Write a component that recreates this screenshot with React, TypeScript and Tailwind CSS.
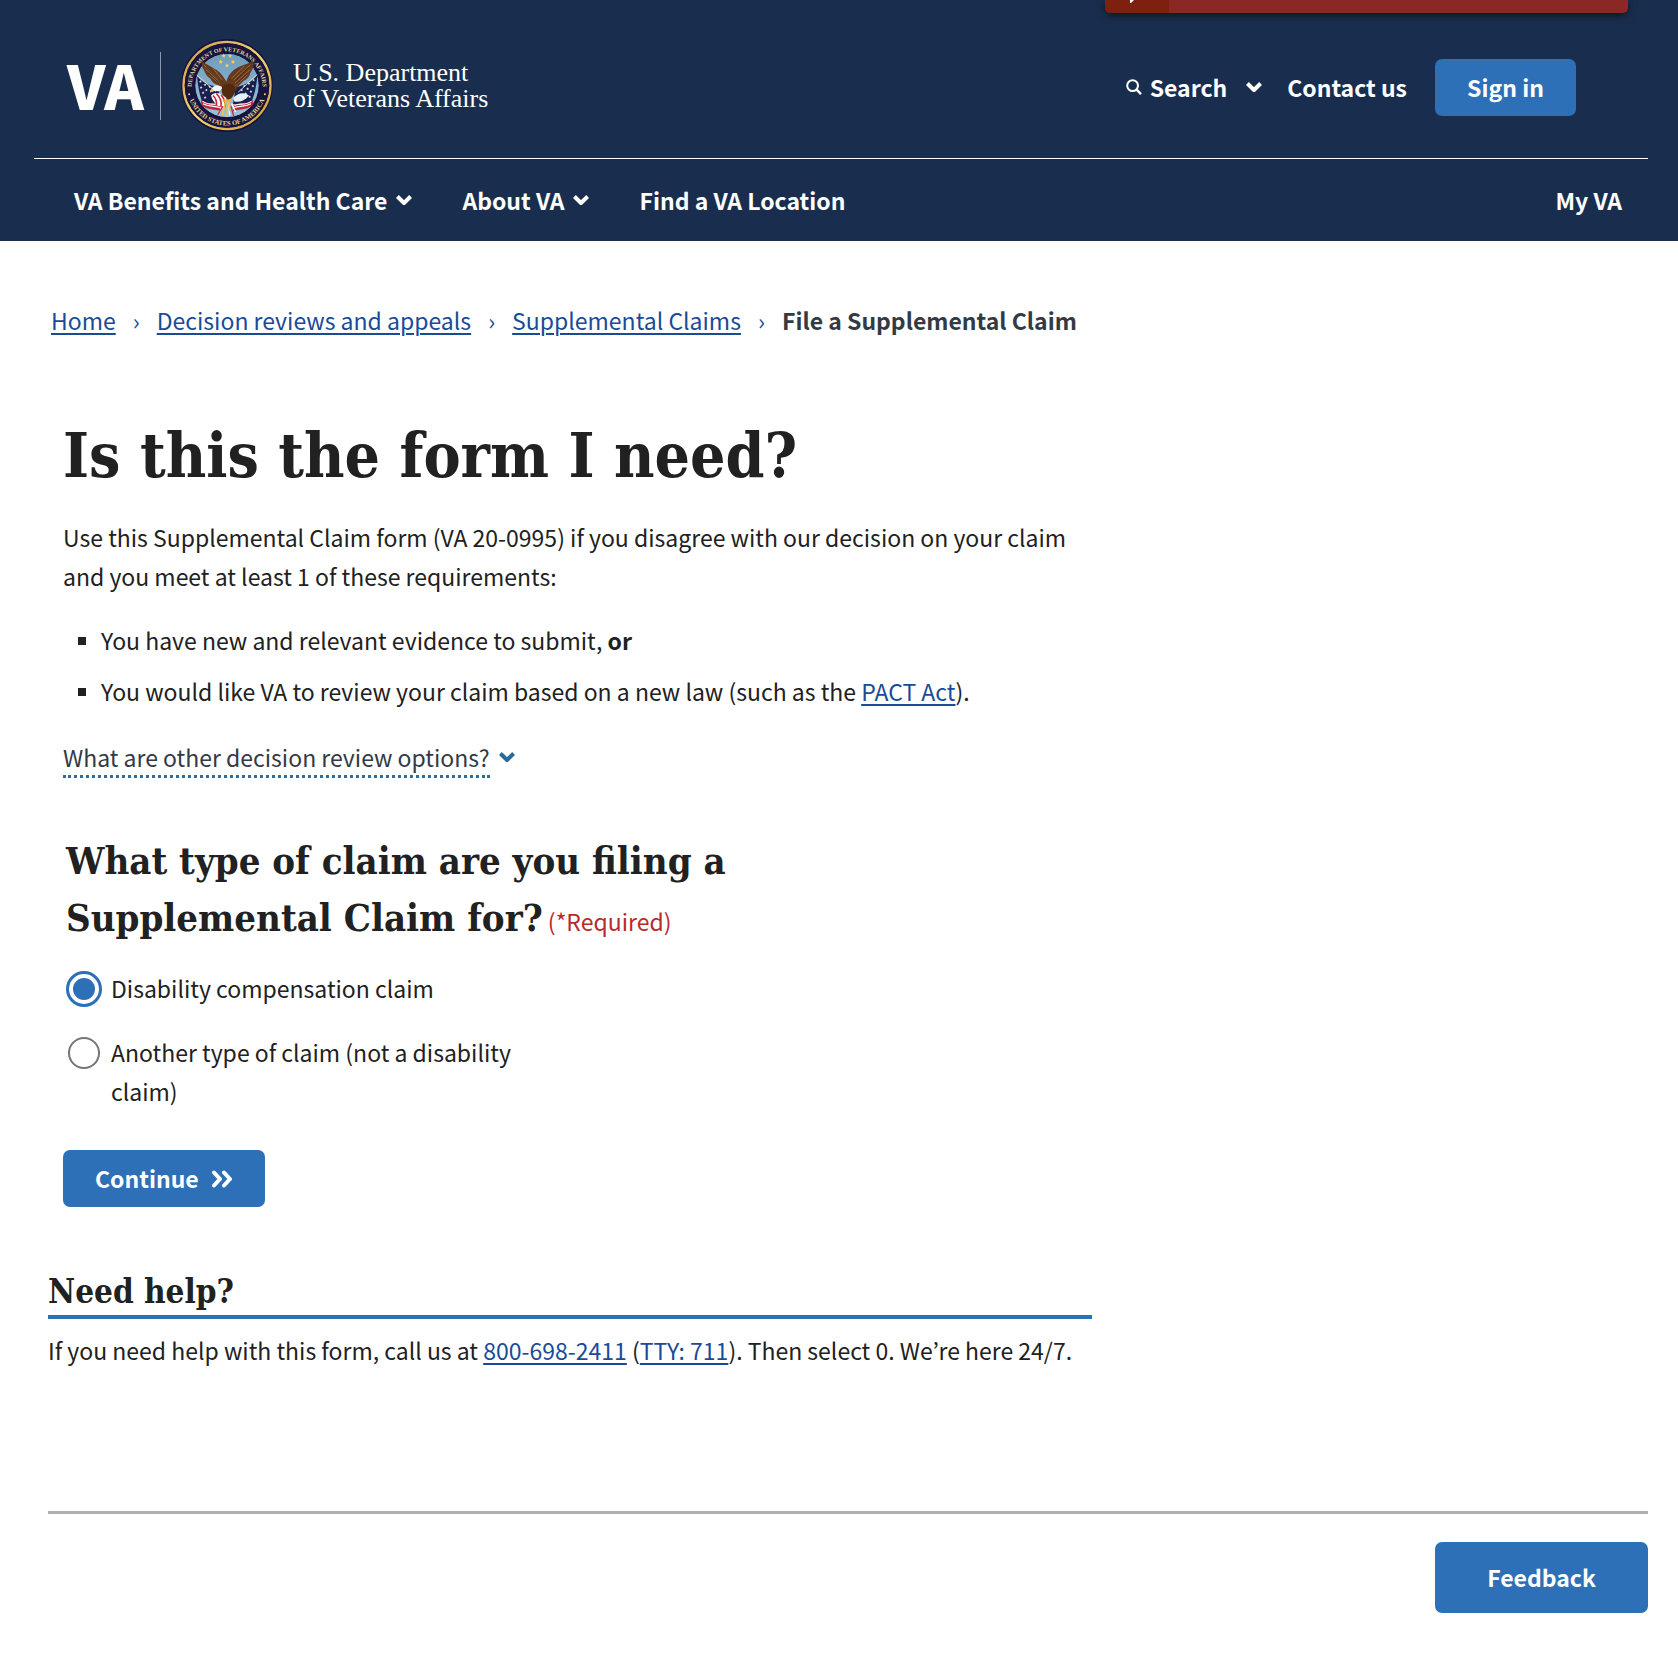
import React, { useState } from "react";

const slab = "font-['DejaVu_Serif_Condensed','DejaVu_Serif',serif]";
const link = "text-[#1a4b98] underline decoration-2 underline-offset-[3px]";
const primary = "rounded-[7px] bg-[#2d70b7] font-bold text-white";

function Chevron({ className = "" }: { className?: string }) {
  return (
    <svg viewBox="0 0 18 12" className={className} fill="none" stroke="currentColor" strokeWidth="4" aria-hidden="true">
      <path d="M2.4 2.5 9 9 15.6 2.5" strokeLinejoin="round" />
    </svg>
  );
}

function Star({ x, y, r = 7 }: { x: number; y: number; r?: number }) {
  const pts = Array.from({ length: 10 }, (_, i) => {
    const a = (Math.PI / 5) * i - Math.PI / 2;
    const d = i % 2 ? r * 0.45 : r;
    return `${x + d * Math.cos(a)},${y + d * Math.sin(a)}`;
  }).join(" ");
  return <polygon points={pts} />;
}

const leftStars = [
  [58, 128], [60, 146], [66, 162], [72, 138], [76, 154], [86, 144], [72, 176], [94, 150],
];
const rightStars = [
  [218, 124], [216, 142], [210, 158], [204, 134], [200, 150], [190, 142], [194, 164], [206, 174], [182, 154],
];

function Seal() {
  return (
    <svg viewBox="0 0 276 280" className="h-[93px] w-[92px]" role="img" aria-label="Seal of the Department of Veterans Affairs">
      <defs>
        <path id="arcTop" d="M32 159 A107 107 0 1 1 244 159" />
        <path id="arcBottom" d="M18 155 A121 121 0 0 0 258 155" />
        <linearGradient id="sky" x1="0" y1="0" x2="0" y2="1">
          <stop offset="0" stopColor="#6f9cba" />
          <stop offset="1" stopColor="#9cc3de" />
        </linearGradient>
        <linearGradient id="gold" x1="0" y1="0" x2="1" y2="1">
          <stop offset="0" stopColor="#c89a3c" />
          <stop offset="0.5" stopColor="#f4d576" />
          <stop offset="1" stopColor="#c8962f" />
        </linearGradient>
        <clipPath id="inner"><circle cx="138" cy="140" r="97" /></clipPath>
      </defs>
      <ellipse cx="138" cy="140" rx="138" ry="140" fill="#17123a" />
      <circle cx="138" cy="140" r="131" fill="none" stroke="url(#gold)" strokeWidth="7" />
      <circle cx="138" cy="140" r="127" fill="#17143f" />
      <circle cx="138" cy="140" r="97" fill="url(#sky)" stroke="#0f0e33" strokeWidth="3" />
      <g fill="#e2d694" fontFamily="Liberation Serif, serif" fontWeight="700">
        <text fontSize="18"><textPath href="#arcTop" startOffset="50%" textAnchor="middle">DEPARTMENT OF VETERANS AFFAIRS</textPath></text>
        <text fontSize="20"><textPath href="#arcBottom" startOffset="50%" textAnchor="middle">UNITED STATES OF AMERICA</textPath></text>
        <circle cx="24" cy="166" r="3" />
        <circle cx="252" cy="166" r="3" />
      </g>
      <g fill="#f2d158">
        <Star x={128} y={51} /><Star x={147} y={51} /><Star x={119} y={69} /><Star x={156} y={69} /><Star x={138} y={80} />
      </g>
      <g clipPath="url(#inner)">
        <path d="M48 112C62 130 84 138 112 146L118 196C100 196 82 196 64 190C56 170 50 140 48 112Z" fill="#17204f" />
        <path d="M229 108C214 130 192 138 164 146L156 196C176 196 194 196 212 188C220 170 228 140 229 108Z" fill="#17204f" />
        <g fill="#e6edf7">
          {leftStars.map(([x, y]) => <Star key={`${x}-${y}`} x={x} y={y} r={4.5} />)}
          {rightStars.map(([x, y]) => <Star key={`${x}-${y}`} x={x} y={y} r={4.5} />)}
        </g>
        <path d="M44 106 104 158M232 104 172 160" stroke="#dfd9c8" strokeWidth="3" />
        <path d="M60 184C80 200 96 190 116 198L120 218C102 210 80 216 60 198Z" fill="#c02637" />
        <path d="M66 195C84 206 98 198 120 208M64 187C84 202 98 192 116 200" stroke="#fff" strokeWidth="3.5" fill="none" />
        <path d="M216 184C196 200 180 190 160 198L156 218C174 210 196 216 216 198Z" fill="#c02637" />
        <path d="M210 195C192 206 178 198 156 208M212 187C192 202 178 192 160 200" stroke="#fff" strokeWidth="3.5" fill="none" />
      </g>
      <path d="M62 66C76 76 94 84 108 94C120 102 128 114 136 128C142 106 156 92 178 82C192 76 204 73 217 67C220 82 216 92 208 102C206 114 196 122 188 126C180 136 170 142 166 152L150 180 126 172 118 142C104 138 92 130 88 120C76 112 72 102 68 92C63 84 60 76 62 66Z" fill="#65391d" />
      <path d="M68 78 114 122M74 92 112 126M84 108 116 134M96 88 124 124M208 78 158 124M208 92 162 132M200 108 162 142M190 82 152 118" stroke="#9c6b40" strokeWidth="3" fill="none" />
      <path d="M76 84 116 124M82 102 114 132M202 86 164 126M200 102 164 138" stroke="#341a0e" strokeWidth="2" fill="none" />
      <path d="M124 142C142 128 160 136 164 150C162 166 154 176 142 184C128 176 120 160 124 142Z" fill="#53290f" />
      <path d="M92 152C94 140 108 136 122 144C125 150 120 156 112 157C106 158 100 154 94 160Z" fill="#f5f7fa" />
      <path d="M94 150 86 154 88 162 98 156Z" fill="#efc14c" />
      <path d="M156 178C172 160 190 160 204 170C192 186 174 192 160 188Z" fill="#e6f0f7" />
      <path d="M90 170C100 158 118 160 136 178L134 202C116 208 98 198 90 170Z" fill="#fff" />
      <path d="M96 170C104 178 108 188 106 200M106 164C118 176 122 190 120 204M120 168C130 180 134 192 132 204" stroke="#c6283b" strokeWidth="5" fill="none" />
      <path d="M130 198 114 222M142 192 146 230M152 194 164 220" stroke="#fff" strokeWidth="4" />
      <path d="M126 202 110 228M150 202 158 232" stroke="#c6283b" strokeWidth="4" />
      <path d="M134 188 124 230M140 188 138 234M144 188 146 218" stroke="#efc14c" strokeWidth="5" />
      <path d="M128 186H150" stroke="#e7b53f" strokeWidth="7" strokeLinecap="round" />
    </svg>
  );
}

function Header() {
  return (
    <header className="relative bg-[#192e4e] pr-[30px] pl-[34px] text-white">
      <div className="absolute top-0 right-[50px] flex h-[13px] w-[523px] overflow-hidden rounded-b-[5px] bg-[#8b2825] shadow-[0_2px_8px_rgba(0,0,0,0.6)]">
        <div className="w-16 bg-[#7e2010]">
          <svg viewBox="0 0 64 13" className="h-[13px] w-16" aria-hidden="true"><path d="M25 0H29L26 3H25Z" fill="#fff" /></svg>
        </div>
      </div>
      <div className="flex h-[158px] items-center justify-between pt-4 pr-[72px] pl-[33px]">
        <a href="#home" className="flex items-center pb-[3px]" aria-label="VA home">
          <span className="pb-1 text-[60px] leading-[68px] font-black">VA</span>
          <span className="ml-4 h-[68px] w-px bg-[#8c97a7]" />
          <span className="ml-5"><Seal /></span>
          <span className="ml-5 font-['Liberation_Serif',serif] text-[26px] leading-[26px]">
            U.S. Department<br />of Veterans Affairs
          </span>
        </a>
        <div className="flex items-center">
          <button type="button" className="flex items-center font-bold">
            <svg viewBox="0 0 16 16" className="mr-2 h-4 w-4" fill="none" stroke="currentColor" strokeWidth="2" aria-hidden="true">
              <circle cx="6.6" cy="6.6" r="5.4" /><path d="M10.4 10.4 15 15.2" strokeWidth="2.4" />
            </svg>
            Search
            <Chevron className="ml-[18px] h-3 w-[18px]" />
          </button>
          <a href="#contact" className="ml-6 font-bold">Contact us</a>
          <button type="button" className={`${primary} ml-7 h-[57px] w-[141px]`}>Sign in</button>
        </div>
      </div>
      <nav className="flex h-[83px] items-center border-t border-white pr-[26px] pl-10 font-bold">
        <button type="button" className="flex items-center gap-2">VA Benefits and Health Care <Chevron className="h-3 w-[18px]" /></button>
        <button type="button" className="ml-[49px] flex items-center gap-2">About VA <Chevron className="h-3 w-[18px]" /></button>
        <a href="#find" className="ml-[49px]">Find a VA Location</a>
        <a href="#my-va" className="ml-auto">My VA</a>
      </nav>
    </header>
  );
}

function Breadcrumbs() {
  const items = ["Home", "Decision reviews and appeals", "Supplemental Claims"];
  return (
    <nav aria-label="Breadcrumb" className="pt-[60px] pl-[3px]">
      <ol className="flex items-center">
        {items.map((t) => (
          <li key={t} className="flex items-center">
            <a href="#crumb" className={link}>{t}</a>
            <span className="w-[41px] text-center text-[#1a4b98]" aria-hidden="true">›</span>
          </li>
        ))}
        <li className="font-bold text-[#323a45]" aria-current="page">File a Supplemental Claim</li>
      </ol>
    </nav>
  );
}

function ClaimRadio({ id, label, checked, onSelect }: { id: string; label: string; checked: boolean; onSelect: () => void }) {
  return (
    <div className="flex w-[460px] items-start">
      <input
        type="radio"
        id={id}
        name="claim-type"
        checked={checked}
        onChange={onSelect}
        className="mx-[2px] mt-1 h-8 w-8 shrink-0 appearance-none rounded-full border-2 border-[#757575] bg-white checked:border-[5px] checked:border-white checked:bg-[#2d70b7] checked:outline-[3px] checked:outline-[#2d70b7] checked:-outline-offset-1"
      />
      <label htmlFor={id} className="pl-[9px]">{label}</label>
    </div>
  );
}

export default function App() {
  const [claim, setClaim] = useState("disability");
  return (
    <div className="min-h-screen bg-white font-['Noto_Sans_CJK_JP',sans-serif] text-[23px] leading-[39px] text-[#212121]">
      <Header />
      <div className="pr-[30px] pl-12">
        <Breadcrumbs />
        <main className="max-w-[1044px]">
          <div className="px-[15px]">
            <h1 className={`${slab} mt-[75px] text-[62px] leading-[82px] font-bold`}>Is this the form I need?</h1>
            <p className="mt-[21px]">
              Use this Supplemental Claim form (VA 20-0995) if you disagree with our decision on your claim and you meet at least 1 of these requirements:
            </p>
            <ul className="mt-[25px] space-y-3">
              <li className="flex items-center"><span className="mr-[15px] ml-[15px] h-2 w-2 bg-[#212121]" /><span>You have new and relevant evidence to submit, <strong>or</strong></span></li>
              <li className="flex items-center"><span className="mr-[15px] ml-[15px] h-2 w-2 bg-[#212121]" /><span>You would like VA to review your claim based on a new law (such as the <a href="#pact" className={link}>PACT Act</a>).</span></li>
            </ul>
            <button type="button" className="mt-7 flex items-center gap-2 text-[#323a45]">
              <span className="border-b-[3px] border-dotted border-[#2d6e9e] leading-9">What are other decision review options?</span>
              <Chevron className="mb-[3px] h-3 w-[18px] text-[#2a6a99]" />
            </button>
            <form onSubmit={(e) => e.preventDefault()}>
              <fieldset className="mt-[54px] pl-[3px]">
                <legend className={`${slab} w-[690px] text-[38px] leading-[57px] font-bold`}>
                  What type of claim are you filing a Supplemental Claim for?
                  <span className="font-['Noto_Sans_CJK_JP',sans-serif] text-[23px] leading-[39px] font-normal text-[#b92b2b]"> (*Required)</span>
                </legend>
                <div className="mt-[23px] space-y-[25px]">
                  <ClaimRadio id="claim-disability" label="Disability compensation claim" checked={claim === "disability"} onSelect={() => setClaim("disability")} />
                  <ClaimRadio id="claim-other" label="Another type of claim (not a disability claim)" checked={claim === "other"} onSelect={() => setClaim("other")} />
                </div>
              </fieldset>
              <button type="submit" className={`${primary} mt-[39px] flex h-[57px] items-center gap-3 px-8`}>
                Continue
                <svg viewBox="0 0 22 18" className="h-[18px] w-[22px]" fill="none" stroke="currentColor" strokeWidth="4" strokeLinecap="round" strokeLinejoin="round" aria-hidden="true">
                  <path d="M3 2.5 9 9 3 15.5M13 2.5 19 9 13 15.5" />
                </svg>
              </button>
            </form>
          </div>
          <section className="mt-[61px]">
            <h2 className={`${slab} border-b-4 border-[#2d70b7] text-[33px] leading-[47px] font-bold`}>Need help?</h2>
            <p className="mt-3">
              If you need help with this form, call us at <a href="tel:8006982411" className={link}>800-698-2411</a> (<a href="tel:711" className={link}>TTY: 711</a>). Then select 0. We’re here 24/7.
            </p>
          </section>
        </main>
        <footer className="mt-[141px] flex justify-end border-t-[3px] border-[#aeb0b5] pt-7">
          <button type="button" className={`${primary} h-[71px] w-[213px]`}>Feedback</button>
        </footer>
      </div>
    </div>
  );
}
